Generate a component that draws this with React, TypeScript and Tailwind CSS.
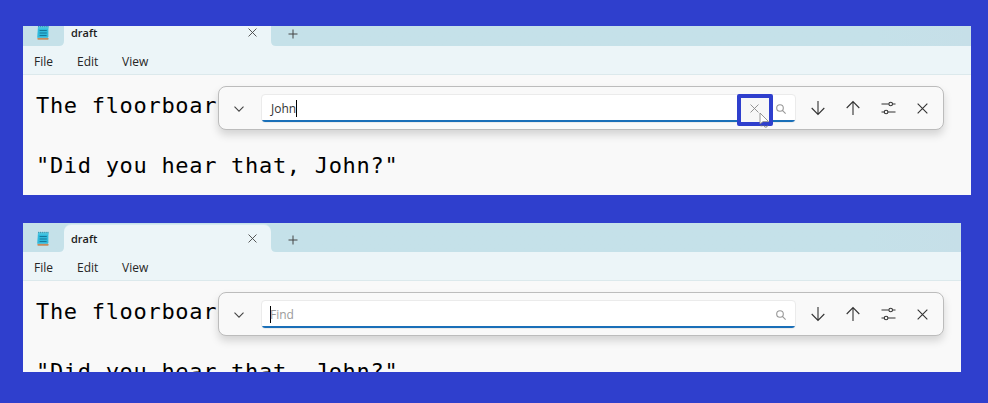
import React from "react";

const ui = "font-['Open_Sans','Noto_Sans',sans-serif]";

function NotepadIcon() {
  return (
    <svg width="14" height="16" viewBox="0 0 14 16" fill="none">
      <rect x="1.4" y="12.7" width="11.2" height="2.1" rx="0.8" fill="#c58b5c" />
      <path d="M2 1.6h10.4v9.6q0 1.6-1.2 1.6H1.2z" fill="#2fb9dc" />
      <path d="M2 1.6h10.4v2H2z" fill="#4cc8e2" />
      <path d="M2.6 0.8v1.4M4.5 0.8v1.4M6.4 0.8v1.4M8.3 0.8v1.4M10.2 0.8v1.4M12 0.8v1.4" stroke="#3688a1" strokeWidth="0.8" />
      <path d="M3.6 5.5h7.2M3.6 8h7.2M3.6 10.5h7" stroke="#14789a" strokeWidth="1.1" />
    </svg>
  );
}

function Cross({ size, color }: { size: number; color: string }) {
  return (
    <svg width={size} height={size} viewBox="0 0 10 10" fill="none" stroke={color} strokeWidth="1">
      <path d="M0.6 0.6l8.8 8.8M9.4 0.6L0.6 9.4" />
    </svg>
  );
}

function SearchIcon() {
  return (
    <svg width="10" height="10" viewBox="0 0 10 10" fill="none" stroke="#979797" strokeWidth="1.1">
      <circle cx="4" cy="4" r="3.3" />
      <path d="M6.4 6.4l3.2 3.2" />
    </svg>
  );
}

function Arrow({ up }: { up?: boolean }) {
  return (
    <svg width="14" height="16" viewBox="0 0 14 16" fill="none" stroke="#333" strokeWidth="1.1">
      {up ? <path d="M7 15V1.5M0.7 8L7 1.6 13.3 8" /> : <path d="M7 1v13.5M0.7 8L7 14.4 13.3 8" />}
    </svg>
  );
}

function OptionsIcon() {
  return (
    <svg width="15" height="14" viewBox="0 0 15 14" fill="none" stroke="#333" strokeWidth="1.1">
      <path d="M0.5 3H7.8M11.6 3H14.5M0.5 11H3.2M7 11H14.5" />
      <circle cx="9.7" cy="3" r="1.8" />
      <circle cx="5.1" cy="11" r="1.8" />
    </svg>
  );
}

function TabStrip() {
  return (
    <div className="flex h-[29px] items-end bg-gradient-to-r from-[#c5e1e9] from-90% to-[#c6dfe8]">
      <div className="flex h-full w-[41px] items-center justify-center pt-[2px] pr-[2px]">
        <NotepadIcon />
      </div>
      <div className="relative flex h-[27px] w-[207px] items-center justify-between rounded-t-[7px] bg-[#ecf5f8] pr-[14px] pl-[7px] shadow-[0_-1px_0_#d6eaef]">
        <svg className="absolute bottom-0 -left-[5px]" width="5" height="5" viewBox="0 0 5 5">
          <path d="M5 0v5H0Q5 5 5 0z" fill="#ecf5f8" />
        </svg>
        <svg className="absolute -right-[5px] bottom-0" width="5" height="5" viewBox="0 0 5 5">
          <path d="M0 0v5H5Q0 5 0 0z" fill="#ecf5f8" />
        </svg>
        <span className="text-[11px] leading-4 font-semibold text-[#1c1c1c]">draft</span>
        <span className="pb-px">
          <Cross size={9} color="#444" />
        </span>
      </div>
      <div className="flex h-[27px] w-[44px] items-center justify-center pt-[2px]">
        <svg width="10" height="10" viewBox="0 0 10 10" stroke="#444" strokeWidth="1">
          <path d="M5 0.5v9M0.5 5h9" />
        </svg>
      </div>
    </div>
  );
}

function FindBar({ query, clearing }: { query: string; clearing?: boolean }) {
  return (
    <div className="absolute top-[69px] left-[195px] flex h-[44px] w-[726px] items-center rounded-[8px] border border-[#bcbcbc] bg-[#f9f9f9] shadow-[0_5px_9px_rgba(0,0,0,0.15)]">
      <div className="flex w-[42px] justify-center pt-px pr-[2px]">
        <svg width="10" height="6" viewBox="0 0 10 6" fill="none" stroke="#444" strokeWidth="1.1">
          <path d="M0.5 0.6L5 5.1 9.5 0.6" />
        </svg>
      </div>
      <div className="relative mt-px flex h-[29px] w-[535px] items-center overflow-hidden rounded-[4px] border border-[#ebebeb] bg-white pl-[8px] text-[12px] leading-none">
        {query ? (
          <>
            <span className="pt-px pl-px text-[#333]">{query}</span>
            <span className="h-[17px] w-px bg-black" />
          </>
        ) : (
          <>
            <span className="h-[17px] w-px bg-black" />
            <span className="-ml-px pt-px text-[#9b9b9b]">Find</span>
          </>
        )}
        <span className="ml-auto pr-[9px]">
          <SearchIcon />
        </span>
        <div className="absolute inset-x-0 -bottom-px h-[3px] bg-[#1a6fb8]" />
      </div>
      <div className="ml-[4px] flex">
        <div className="flex w-[35px] items-center justify-center"><Arrow /></div>
        <div className="flex w-[35px] items-center justify-center"><Arrow up /></div>
        <div className="flex w-[36px] items-center justify-center pl-px"><OptionsIcon /></div>
        <div className="flex w-[33px] items-center justify-center"><Cross size={11} color="#333" /></div>
      </div>
      {clearing && (
        <>
          <div className="absolute top-[7px] left-[518px] flex h-[32px] w-[36px] items-center justify-center rounded-[2px] border-4 border-[#2f3fcd] bg-[#f7f7f7] pr-[2px] pb-[4px]">
            <Cross size={9} color="#888" />
          </div>
          <svg className="absolute top-[25px] left-[540px]" width="12" height="17" viewBox="0 0 12 17" fill="none">
            <path d="M1 1v11l3-2.4h5.6z" fill="#fff" stroke="#8a8a8a" strokeWidth="0.9" />
            <path d="M1.5 13.8h2M5 13.2q0 2 1.8 2t1.6-2" stroke="#777" strokeWidth="0.9" />
          </svg>
        </>
      )}
    </div>
  );
}

function Notepad({ query, clearing }: { query: string; clearing?: boolean }) {
  return (
    <div className="relative">
      <TabStrip />
      <div className="flex h-[29px] border-b border-[#dce9ec] bg-[#ecf5f8] pl-[11px] text-[12px] leading-[31px] text-[#262626]">
        <span className="w-[43px]">File</span>
        <span className="w-[45px]">Edit</span>
        <span>View</span>
      </div>
      <div className="h-[130px] bg-[#f9f9f9] pt-px pl-[13px] font-['DejaVu_Sans_Mono',monospace] text-[22px] leading-[60px] tracking-[0.69px] whitespace-pre text-black">
        <p>The floorboard</p>
        <p>"Did you hear that, John?"</p>
      </div>
      <FindBar query={query} clearing={clearing} />
    </div>
  );
}

export default function App() {
  return (
    <main className={`flex h-[403px] w-[988px] flex-col gap-[28px] overflow-hidden bg-[#2f3fcd] pt-[26px] pl-[23px] ${ui}`}>
      <section className="h-[169px] w-[948px] shrink-0 overflow-hidden bg-[#f9f9f9]">
        <div className="-mt-[9px]">
          <Notepad query="John" clearing />
        </div>
      </section>
      <section className="h-[149px] w-[938px] shrink-0 overflow-hidden bg-[#f9f9f9]">
        <Notepad query="" />
      </section>
    </main>
  );
}
